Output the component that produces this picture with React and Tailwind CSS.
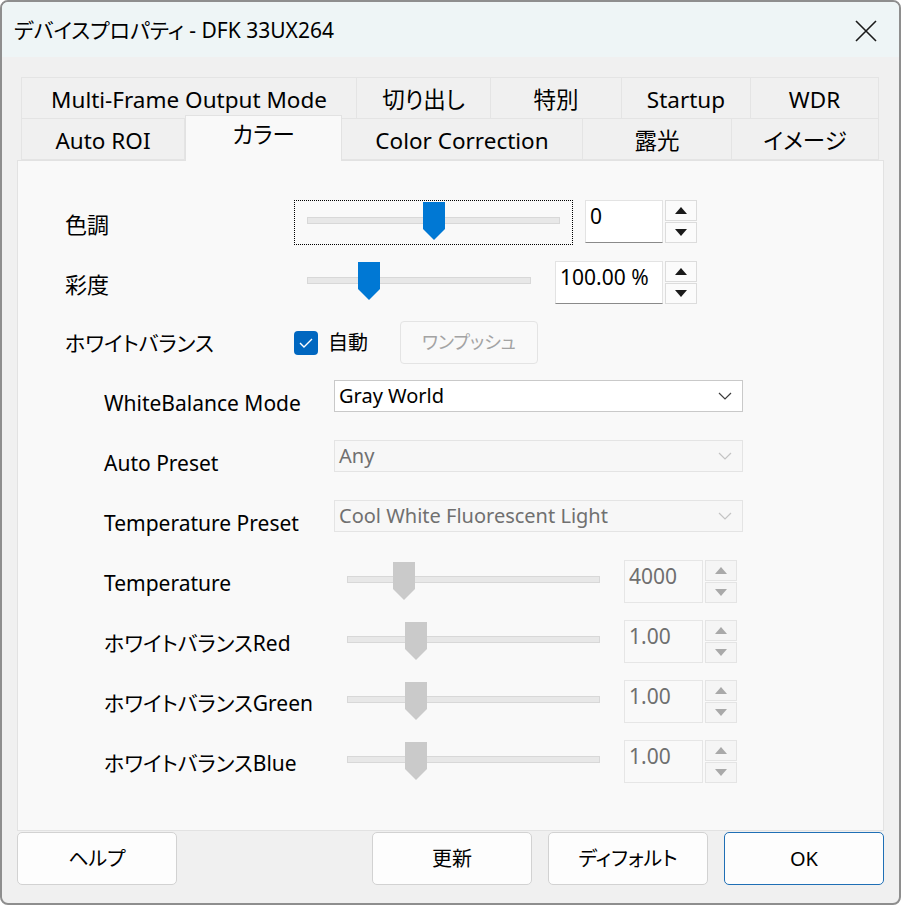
import React from 'react';

const font = "font-['Noto_Sans','Noto_Sans_CJK_JP',sans-serif] [font-feature-settings:'palt']";

function Thumb({ disabled }) {
    return (
        <svg width="22" height="38" viewBox="0 0 22 38">
            <path d="M0 0H22V27L11 38L0 27Z" fill={disabled ? '#cacaca' : '#0078d4'} />
        </svg>
    );
}

function Slider({ box, track, thumb, disabled }) {
    return (
        <div className={'relative shrink-0 ' + box}>
            <div className={'absolute h-[7px] bg-[#e8e8e8] border border-[#d8d8d8] ' + track} />
            <div className={'absolute ' + thumb}><Thumb disabled={disabled} /></div>
        </div>
    );
}

function Tri({ up, disabled }) {
    return (
        <svg width="12" height="7" viewBox="0 0 12 7">
            <path d={up ? 'M0 7L6 0L12 7Z' : 'M0 0L6 7L12 0Z'} fill={disabled ? '#a9a9a9' : '#1a1a1a'} />
        </svg>
    );
}

function Spin({ disabled }) {
    const cls = disabled
        ? 'flex-1 flex items-center justify-center bg-[#f5f5f5] border border-[#e4e4e4]'
        : 'flex-1 flex items-center justify-center bg-[#fbfbfb] border border-[#dcdcdc]';
    return (
        <div className="flex flex-col w-[32px] h-[43px] ml-[2px] gap-px">
            <div className={cls}><Tri up disabled={disabled} /></div>
            <div className={cls}><Tri disabled={disabled} /></div>
        </div>
    );
}

function Edit({ value, w, disabled }) {
    return (
        <div className={'h-[43px] pl-[4px] leading-[30px] text-[21px] ' + w + (disabled
            ? ' bg-[#f9f9f9] border border-[#e6e6e6] text-[#6f6f6f]'
            : ' bg-white border border-[#e3e3e3] border-b-[#8a8a8a] text-black')}>
            {value}
        </div>
    );
}

function Chevron({ disabled }) {
    return (
        <svg width="14" height="8" viewBox="0 0 14 8" className="mr-[10px]">
            <path d="M1 1L7 7L13 1" fill="none" stroke={disabled ? '#c4c4c4' : '#3a3a3a'} strokeWidth="1.2" />
        </svg>
    );
}

function Combo({ value, disabled }) {
    return (
        <div className={'w-[409px] h-[32px] flex items-center justify-between pl-[4px] text-[20px] ' + (disabled
            ? 'bg-[#f7f7f7] border border-[#e4e4e4] text-[#707070]'
            : 'bg-white border border-[#c9c9c9] text-black')}>
            <span>{value}</span>
            <Chevron disabled={disabled} />
        </div>
    );
}

function Label({ children, w }) {
    return <div className={'h-[46px] flex items-center shrink-0 text-[21px] text-black pt-[2px] ' + w}>{children}</div>;
}

function Tab({ w, children, selected }) {
    if (selected) {
        return (
            <div className={'relative z-10 h-[46px] -mb-px flex items-center justify-center bg-[#f9f9f9] border border-b-0 border-[#e2e2e2] pb-[8px] ' + w}>
                {children}
            </div>
        );
    }
    return (
        <div className={'h-[42px] flex items-center justify-center border border-[#e4e4e4] -ml-px pt-[3px] ' + w}>
            {children}
        </div>
    );
}

function Button({ children, primary }) {
    return (
        <button className={'w-[160px] h-[53px] rounded-[5px] bg-[#fdfdfd] text-[20px] text-black border ' + (primary ? 'border-[#1f6fb5]' : 'border-[#d2d2d2]')}>
            {children}
        </button>
    );
}

export default function App() {
    return (
        <div className={'w-[901px] h-[905px] bg-white ' + font}>
            <div className="w-full h-full flex flex-col border-2 border-[#8e8e8e] rounded-[8px] overflow-hidden bg-[#f0f0f0]">
                <div className="h-[55px] shrink-0 bg-[#eef5f6] flex items-center justify-between pl-[12px] pr-[22px] pt-[3px]">
                    <span className="text-[21px] text-black">デバイスプロパティ - DFK 33UX264</span>
                    <svg width="22" height="22" viewBox="0 0 22 22">
                        <path d="M1 1L21 21M21 1L1 21" stroke="#1a1a1a" strokeWidth="1.6" />
                    </svg>
                </div>

                <div className="flex-1 flex flex-col px-[15px] pt-[20px] pb-[18px]">
                    <div className="flex flex-col pl-[4px] pr-[5px] text-[22.5px] text-black">
                        <div className="flex pl-px">
                            <Tab w="w-[336px]">Multi-Frame Output Mode</Tab>
                            <Tab w="w-[135px]">切り出し</Tab>
                            <Tab w="w-[132px]">特別</Tab>
                            <Tab w="w-[130px]">Startup</Tab>
                            <Tab w="w-[129px]">WDR</Tab>
                        </div>
                        <div className="flex h-[42px] items-end -mt-px pl-px">
                            <Tab w="w-[164px]">Auto ROI</Tab>
                            <Tab w="w-[157px]" selected>カラー</Tab>
                            <Tab w="w-[242px]">Color Correction</Tab>
                            <Tab w="w-[150px]">露光</Tab>
                            <Tab w="w-[148px]">イメージ</Tab>
                        </div>
                    </div>

                    <div className="flex-1 bg-[#f9f9f9] border border-[#e2e2e2] pt-[39px]">
                        <div className="flex h-[60px] items-start pl-[47px]">
                            <Label w="w-[229px] text-[22px]">色調</Label>
                            <Slider box="w-[279px] h-[45px] border border-dotted border-black" track="left-[12px] w-[253px] top-[16px]" thumb="left-[128px] top-px" />
                            <div className="ml-[12px] flex"><Edit value="0" w="w-[78px]" /><Spin /></div>
                        </div>
                        <div className="flex h-[60px] items-start pl-[47px]">
                            <Label w="w-[229px] text-[22px]">彩度</Label>
                            <Slider box="w-[250px] h-[45px] mt-px" track="left-[13px] w-[224px] top-[16px]" thumb="left-[64px] top-px" />
                            <div className="ml-[11px] mt-px flex"><Edit value="100.00 %" w="w-[108px]" /><Spin /></div>
                        </div>
                        <div className="flex h-[60px] items-start pl-[47px]">
                            <Label w="w-[229px]">ホワイトバランス</Label>
                            <div className="h-[46px] flex items-center">
                                <div className="w-[24px] h-[24px] rounded-[4px] bg-[#0067c0] flex items-center justify-center">
                                    <svg width="14" height="10" viewBox="0 0 14 10">
                                        <path d="M1 5L5 9L13 1" fill="none" stroke="white" strokeWidth="1.4" />
                                    </svg>
                                </div>
                                <span className="ml-[10px] text-[20px] text-black">自動</span>
                            </div>
                            <div className="ml-[32px] mt-px w-[138px] h-[43px] rounded-[4px] border border-[#e4e4e4] bg-[#f9f9f9] flex items-center justify-center text-[18px] text-[#a3a3a3]">
                                ワンプッシュ
                            </div>
                        </div>
                        <div className="flex h-[60px] items-start pl-[86px]">
                            <Label w="w-[230px]">WhiteBalance Mode</Label>
                            <Combo value="Gray World" />
                        </div>
                        <div className="flex h-[60px] items-start pl-[86px]">
                            <Label w="w-[230px]">Auto Preset</Label>
                            <Combo value="Any" disabled />
                        </div>
                        <div className="flex h-[60px] items-start pl-[86px]">
                            <Label w="w-[230px]">Temperature Preset</Label>
                            <Combo value="Cool White Fluorescent Light" disabled />
                        </div>
                        {[
                            ['Temperature', '4000', 'left-[59px] top-[2px]'],
                            ['ホワイトバランスRed', '1.00', 'left-[71px] top-[2px]'],
                            ['ホワイトバランスGreen', '1.00', 'left-[71px] top-[2px]'],
                            ['ホワイトバランスBlue', '1.00', 'left-[71px] top-[2px]'],
                        ].map(([label, value, thumb]) => (
                            <div key={label} className="flex h-[60px] items-start pl-[86px]">
                                <Label w="w-[230px]">{label}</Label>
                                <Slider box="w-[290px] h-[45px]" track="left-[13px] w-[253px] top-[16px]" thumb={thumb} disabled />
                                <div className="flex"><Edit value={value} w="w-[79px]" disabled /><Spin disabled /></div>
                            </div>
                        ))}
                    </div>

                    <div className="flex mt-px">
                        <Button>ヘルプ</Button>
                        <div className="ml-auto flex gap-[16px]">
                            <Button>更新</Button>
                            <Button>ディフォルト</Button>
                            <Button primary>OK</Button>
                        </div>
                    </div>
                </div>
            </div>
        </div>
    );
}
